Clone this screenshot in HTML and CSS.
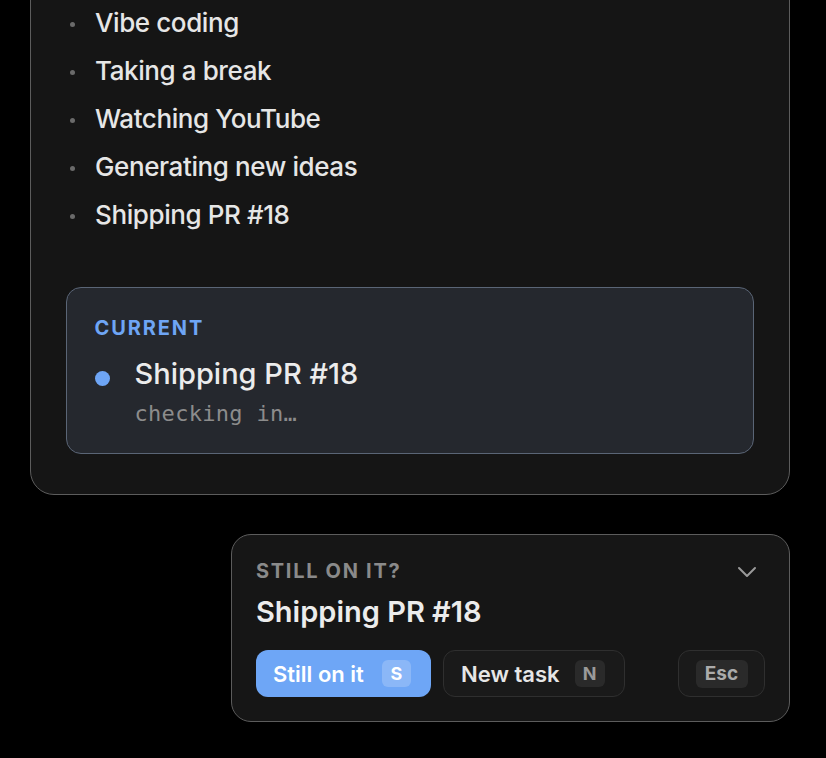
FILE: index.html
```html
<!DOCTYPE html>
<html lang="en">
<head>
<meta charset="utf-8">
<title>Status</title>
<link rel="stylesheet" href="styles.css">
</head>
<body>
<div class="page">
  <section class="panel">
    <ul class="activities">
      <li>Vibe coding</li>
      <li>Taking a break</li>
      <li>Watching YouTube</li>
      <li>Generating new ideas</li>
      <li>Shipping PR #18</li>
    </ul>
    <div class="current">
      <div class="label label-blue">CURRENT</div>
      <div class="current-row">
        <span class="dot"></span>
        <div class="current-text">
          <div class="current-title">Shipping PR #18</div>
          <div class="current-sub">checking in…</div>
        </div>
      </div>
    </div>
  </section>

  <section class="popup">
    <div class="popup-head">
      <div class="label label-grey">STILL ON IT?</div>
      <svg class="chevron" width="20" height="12" viewBox="0 0 20 12" aria-hidden="true">
        <path d="M2 2 L10 10 L18 2" fill="none" stroke="#9a9a9a" stroke-width="2" stroke-linecap="round" stroke-linejoin="round"/>
      </svg>
    </div>
    <div class="popup-title">Shipping PR #18</div>
    <div class="actions">
      <button class="btn btn-primary">Still on it <span class="kbd kbd-primary">S</span></button>
      <button class="btn btn-ghost">New task <span class="kbd">N</span></button>
      <button class="btn btn-ghost btn-esc"><span class="kbd kbd-esc">Esc</span></button>
    </div>
  </section>
</div>
</body>
</html>
```

FILE: styles.css
```css
* { box-sizing: border-box; }

html, body {
  margin: 0;
  padding: 0;
  background: #000;
  height: 100%;
  overflow: hidden;
}

body {
  font-family: Inter, "Noto Sans", "Liberation Sans", sans-serif;
  color: #e8e8e8;
}

.page {
  width: 760px;
  margin-left: 30px;
  display: flex;
  flex-direction: column;
  align-items: flex-end;
}

.panel {
  width: 760px;
  margin-top: -38px;
  background: #151515;
  border: 1.5px solid #5c5c5c;
  border-radius: 24px;
  padding: 36px 35px 39.5px 35px;
}

.activities {
  list-style: none;
  margin: 0;
  padding: 0;
}

.activities li {
  display: flex;
  align-items: center;
  height: 48px;
  font-size: 26px;
  font-weight: 450;
  line-height: 48px;
  color: #e6e6e6;
  letter-spacing: -0.4px;
}

.activities li::before {
  content: "";
  width: 5px;
  height: 5px;
  border-radius: 50%;
  background: #6a6a6a;
  margin-left: 4px;
  margin-right: 20px;
  margin-top: 3px;
  flex: none;
}

.current {
  margin-top: 48px;
  background: #25282e;
  border: 1px solid #5a6576;
  border-radius: 15px;
  padding: 28px 27px 26px 27.5px;
}

.label {
  font-size: 20px;
  line-height: 24px;
  font-weight: 700;
  letter-spacing: 1.9px;
}

.label-blue { color: #6ea5f5; }

.label-grey {
  color: #8a8a8a;
  font-size: 20px;
  line-height: 23px;
  letter-spacing: 1.7px;
}

.current-row {
  display: flex;
  align-items: flex-start;
  margin-top: 17px;
}

.dot {
  width: 15px;
  height: 15px;
  border-radius: 50%;
  background: #6ea5f5;
  margin-top: 13.5px;
  margin-right: 25px;
  flex: none;
}

.current-title {
  font-size: 29px;
  line-height: 34px;
  font-weight: 500;
  color: #ececec;
}

.current-sub {
  margin-top: 10px;
  font-family: "DejaVu Sans Mono", "Liberation Mono", monospace;
  font-size: 22px;
  line-height: 26px;
  letter-spacing: 0.3px;
  color: #8c8c8c;
}

.popup {
  width: 559px;
  margin-top: 39px;
  background: #161616;
  border: 1.5px solid #5c5c5c;
  border-radius: 20px;
  padding: 25px 24px 24px 24px;
}

.popup-head {
  display: flex;
  align-items: center;
  justify-content: space-between;
}

.chevron {
  margin-right: 8px;
  margin-top: 2px;
}

.popup-title {
  margin-top: 12px;
  font-size: 29px;
  line-height: 34px;
  font-weight: 600;
  color: #ececec;
}

.actions {
  display: flex;
  align-items: center;
  gap: 12px;
  margin-top: 21.5px;
}

.btn {
  display: inline-flex;
  align-items: center;
  height: 47px;
  border-radius: 12px;
  font-family: inherit;
  font-size: 22px;
  font-weight: 600;
  padding: 0 17px 0 17px;
  gap: 15px;
  cursor: pointer;
}

.btn-primary {
  background: #6ea6f6;
  border: none;
  color: #ffffff;
  width: 175px;
  gap: 18px;
}

.btn-ghost {
  background: #1a1a1a;
  border: 1px solid #2f2f2f;
  color: #e6e6e6;
  width: 182px;
}

.btn-esc {
  margin-left: auto;
  width: 87px;
  justify-content: center;
  padding: 0;
}

.kbd {
  display: inline-flex;
  align-items: center;
  justify-content: center;
  min-width: 30px;
  height: 27px;
  border-radius: 6px;
  background: #2a2a2a;
  color: #9a9a9a;
  font-size: 18px;
  font-weight: 700;
  padding: 0 7px;
}

.kbd-primary {
  background: rgba(255, 255, 255, 0.2);
  color: #ffffff;
  min-width: 29px;
}

.kbd-esc {
  width: 52px;
  height: 28px;
  font-size: 19px;
  color: #ababab;
}
```
